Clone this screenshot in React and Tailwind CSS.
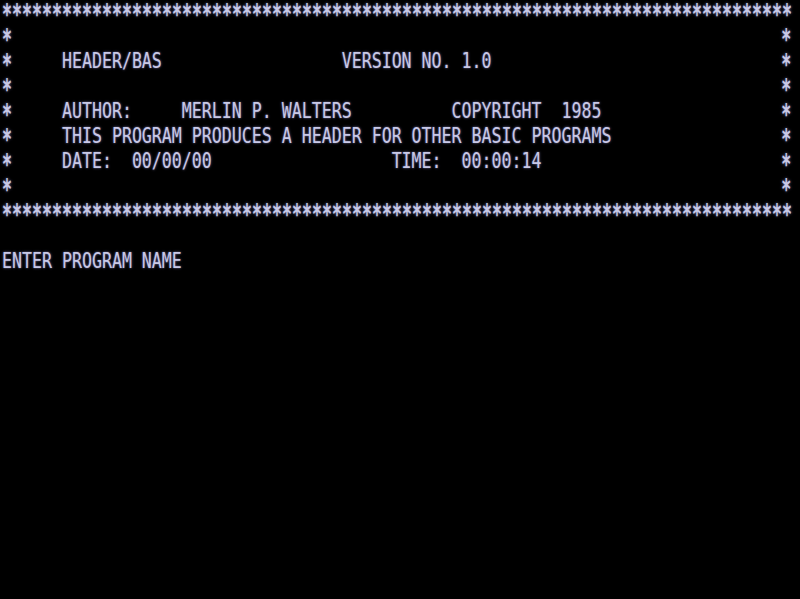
import React from "react";

const COLS = 79;

// place text fragments at fixed columns on an 80-col screen
const row = (parts, border) => {
  const chars = Array(COLS).fill(" ");
  if (border) {
    chars[0] = "*";
    chars[COLS - 1] = "*";
  }
  parts.forEach(([col, text]) => {
    text.split("").forEach((c, i) => (chars[col + i] = c));
  });
  return chars.join("");
};

const stars = "*".repeat(COLS);

const lines = [
  stars,
  row([], true),
  row([[6, "HEADER/BAS"], [34, "VERSION NO. 1.0"]], true),
  row([], true),
  row([[6, "AUTHOR:"], [18, "MERLIN P. WALTERS"], [45, "COPYRIGHT  1985"]], true),
  row([[6, "THIS PROGRAM PRODUCES A HEADER FOR OTHER BASIC PROGRAMS"]], true),
  row([[6, "DATE:  00/00/00"], [39, "TIME:  00:00:14"]], true),
  row([], true),
  stars,
  "",
  "ENTER PROGRAM NAME",
];

const Line = ({ text }) => (
  <div className="h-[25px] flex items-center whitespace-pre">
    {text.split(/(\*)/).map((seg, i) =>
      seg === "*" ? (
        <span key={i} className="inline-block w-[10px] leading-[13px] text-center font-bold scale-y-[1.75] translate-y-[2px]">
          *
        </span>
      ) : (
        <span key={i} className="inline-block leading-[18px] scale-y-[1.33] -translate-y-[2px]">
          {seg}
        </span>
      )
    )}
  </div>
);

export default function App() {
  return (
    <div className="w-[800px] h-[599px] bg-black overflow-hidden pl-[2px] font-['DejaVu_Sans_Mono',monospace] text-[16.6px] leading-[25px] text-[#c8c8e6] [text-shadow:0_0_2px_#7a7ab0]">
      {lines.map((l, i) => (
        <Line key={i} text={l} />
      ))}
    </div>
  );
}
